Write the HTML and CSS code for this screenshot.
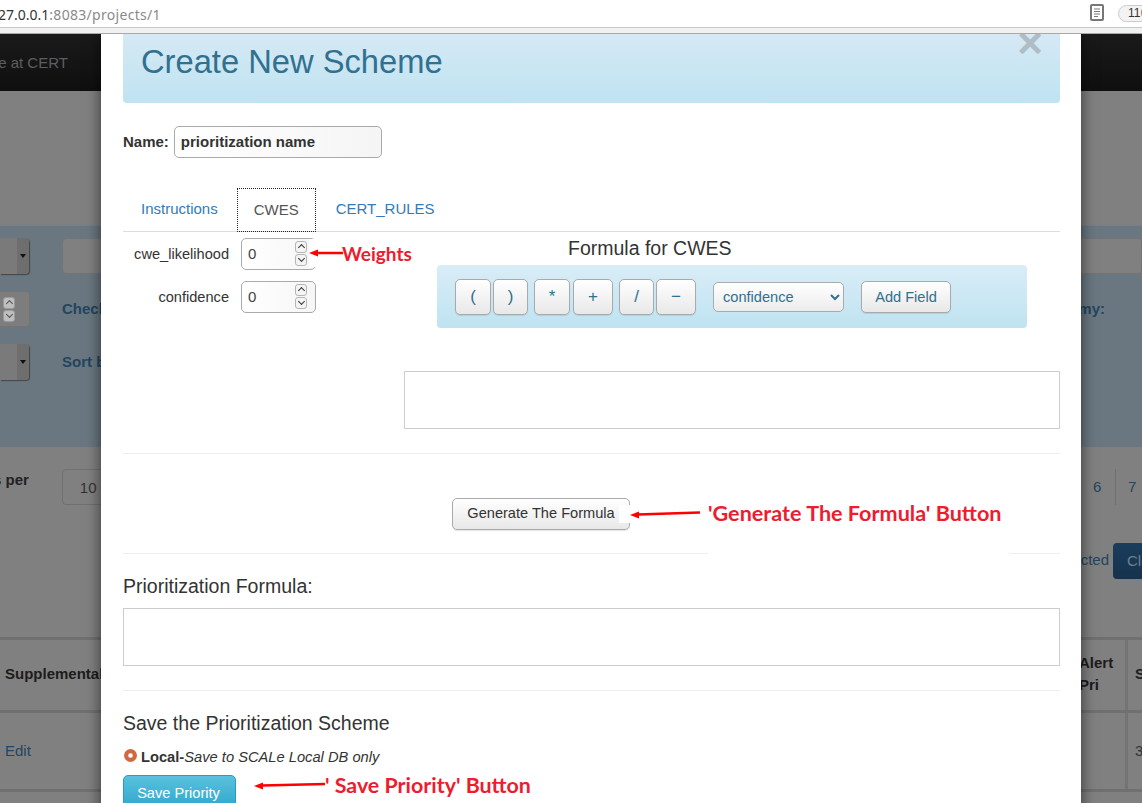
FILE: index.html
```html
<!DOCTYPE html>
<html lang="en">
<head>
  <meta charset="UTF-8">
  <title>SCALe - Create New Scheme</title>
  <link rel="stylesheet" href="styles.css">
</head>
<body>
  <div class="browser-bar">
    <div class="url"><b>27.0.0.1</b>:8083/projects/1</div>
    <svg class="reader" width="15" height="18" viewBox="0 0 15 18">
      <rect x="1" y="1" width="12" height="15" rx="1" fill="#fff" stroke="#777" stroke-width="2"/>
      <path d="M4 5h6M4 7.5h6M4 10h6M4 12.5h4" stroke="#777" stroke-width="1"/>
    </svg>
    <div class="ext-pill">11<span>6</span></div>
  </div>
  <div class="bar-strip"></div>

  <div class="page">
    <div class="navbar"><span class="brand">SCALe at CERT</span></div>
    <div class="page-gap"></div>

    <div class="filters">
      <div class="filter-row">
        <div class="bg-select"><i></i></div>
        <div class="bg-input"></div>
      </div>
      <div class="filter-row">
        <div class="bg-number">
          <span class="spin-btns"><span class="spin-btn up"></span><span class="spin-btn down"></span></span>
        </div>
        <b class="bg-label">Check</b>
        <b class="bg-label right">Taxonomy:</b>
      </div>
      <div class="filter-row">
        <div class="bg-select"><i></i></div>
        <b class="bg-label">Sort by</b>
      </div>
    </div>

    <div class="pager-row">
      <b class="per-label">s per</b>
      <div class="per-box">10</div>
      <div class="pager"><span>6</span><span>7</span></div>
    </div>
    <div class="action-row">
      <a class="selected-link">Selected</a>
      <div class="dark-btn">Clear</div>
    </div>

    <div class="bg-table">
      <div class="bg-tr head">
        <div class="bg-td first">Supplemental</div>
        <div class="bg-td alert">Alert<br>Pri</div>
        <div class="bg-td last">S</div>
      </div>
      <div class="bg-tr body">
        <div class="bg-td first"><a>Edit</a></div>
        <div class="bg-td alert"></div>
        <div class="bg-td last">3</div>
      </div>
    </div>

    <div class="modal">
      <div class="modal-head">
        <h2>Create New Scheme</h2>
        <span class="close">&times;</span>
      </div>

      <div class="name-row">
        <label for="prio-name">Name:</label>
        <input id="prio-name" class="name-input" type="text" value="prioritization name">
      </div>

      <ul class="tabs">
        <li><a>Instructions</a></li>
        <li class="active"><a>CWES</a></li>
        <li><a>CERT_RULES</a></li>
      </ul>

      <div class="tab-body">
        <div class="weights">
          <div class="weight">
            <label>cwe_likelihood</label>
            <div class="spinner">
              <input type="text" value="0">
              <span class="spin-btns"><span class="spin-btn up"></span><span class="spin-btn down"></span></span>
            </div>
          </div>
          <div class="weight">
            <label>confidence</label>
            <div class="spinner">
              <input type="text" value="0">
              <span class="spin-btns"><span class="spin-btn up"></span><span class="spin-btn down"></span></span>
            </div>
          </div>
        </div>
        <div class="formula">
          <h4>Formula for CWES</h4>
          <div class="formula-panel">
            <button class="op w36">(</button>
            <button class="op w35">)</button>
            <button class="op w36 gap6 star">*</button>
            <button class="op w40">+</button>
            <button class="op w35 gap6">/</button>
            <button class="op w40">&minus;</button>
            <select class="field-select">
              <option>confidence</option>
            </select>
            <button class="add-field">Add Field</button>
          </div>
        </div>
      </div>

      <textarea class="formula-box"></textarea>
      <hr class="rule-a">

      <button class="generate">Generate The Formula</button>
      <hr class="rule-b">

      <h4 class="section-title">Prioritization Formula:</h4>
      <textarea class="result-box"></textarea>
      <hr class="rule-c">

      <h4 class="section-title save-title">Save the Prioritization Scheme</h4>
      <div class="radio-row">
        <span class="radio"></span>
        <b>Local-</b><i>Save to SCALe Local DB only</i>
      </div>
      <button class="save">Save Priority</button>

      <div class="note note-weights">
        <svg class="arrow" width="34" height="10" viewBox="0 0 34 10"><path d="M34 5H8" stroke="#f00" stroke-width="2.5"/><path d="M0 5l9-3.5v7z" fill="#f00"/></svg>
        <span>Weights</span>
      </div>
      <div class="note note-generate">
        <span>'Generate The Formula' Button</span>
      </div>
      <div class="note-patch">
        <svg class="arrow" width="70" height="10" viewBox="0 0 70 10"><path d="M70 3.5L8 5.5" stroke="#f00" stroke-width="2.5"/><path d="M0 6l9-3.5v7z" fill="#f00"/></svg>
      </div>
      <div class="note note-save">
        <svg class="arrow" width="71" height="10" viewBox="0 0 71 10"><path d="M71 4L8 5.5" stroke="#f00" stroke-width="2.5"/><path d="M0 6l9-3.5v7z" fill="#f00"/></svg>
        <span>' Save Priority' Button</span>
      </div>
    </div>
  </div>
</body>
</html>
```
FILE: styles.css
```css
* {
  box-sizing: border-box;
}

html, body {
  margin: 0;
  height: 803px;
  overflow: hidden;
}

body {
  font-family: "Liberation Sans", Arial, sans-serif;
  font-size: 15px;
  color: #333;
  background: #808080;
}

/* browser chrome */
.browser-bar {
  display: flex;
  align-items: center;
  height: 28px;
  background: #fff;
  border-bottom: 1px solid #c8c8c8;
  overflow: hidden;
}

.url {
  margin: 2px 0 0 -2px;
  font-family: "Noto Sans", sans-serif;
  font-size: 14px;
  letter-spacing: .3px;
  color: #8a8a8a;
}

.url b {
  font-weight: 400;
  letter-spacing: 0;
  color: #333;
}

.reader {
  margin-left: auto;
  margin-top: -1px;
}

.ext-pill {
  flex: none;
  width: 40px;
  height: 17px;
  margin: -1px -16px 0 13px;
  padding-left: 9px;
  border: 1px solid #ccc;
  border-radius: 9px;
  background: #f3f3f3;
  font-size: 12px;
  line-height: 15px;
  color: #333;
}

.ext-pill span {
  color: #c66;
}

.bar-strip {
  height: 6px;
  background: #f1f1f1;
  border-bottom: 1px solid #a8a8a8;
}

/* page behind the modal */
.page {
  position: relative;
  height: 769px;
  overflow: hidden;
}

.navbar {
  height: 57px;
  background: linear-gradient(#1a1a1a, #0f0f0f);
  line-height: 57px;
  overflow: hidden;
}

.brand {
  display: block;
  margin-left: -41px;
  color: #5e5e5e;
}

.page-gap {
  height: 134px;
  background: #808080;
}

.filters {
  display: flex;
  flex-direction: column;
  gap: 17px;
  height: 222px;
  padding-top: 12px;
  background: #6a7780;
  border-top: 1px solid #728089;
}

.filter-row {
  display: flex;
  align-items: center;
  gap: 33px;
  height: 36px;
}

.bg-select {
  display: flex;
  justify-content: flex-end;
  width: 29px;
  height: 36px;
  background: #7a7a7a;
  border-radius: 0 4px 4px 0;
  box-shadow: 1px 1px 1px #444;
}

.bg-select i {
  position: relative;
  display: block;
  width: 12px;
  background: #6e6e6e;
  border-radius: 0 4px 4px 0;
}

.bg-select i::after {
  content: '';
  position: absolute;
  left: 3px;
  top: 16px;
  border: 3px solid transparent;
  border-top: 4px solid #111;
  border-bottom: 0;
}

.bg-input {
  flex: 1;
  height: 36px;
  background: #808080;
  border: 1px solid #747474;
  border-radius: 4px;
}

.bg-number {
  position: relative;
  width: 30px;
  height: 36px;
  margin-right: -1px;
  background: #7d7d7d;
  border: 1px solid #747474;
  border-left: 0;
  border-radius: 0 4px 4px 0;
}

.bg-number .spin-btns {
  top: 5px;
  left: 3px;
  right: auto;
  opacity: .55;
}

.bg-label {
  padding-bottom: 2px;
  color: #23455f;
}

.bg-label.right {
  margin-left: auto;
  margin-right: 37px;
}

.pager-row {
  display: flex;
  height: 96px;
  padding-top: 22px;
}

.per-label {
  margin-left: -7px;
  color: #222;
  line-height: 22px;
}

.per-box {
  width: 60px;
  height: 36px;
  margin-left: 33px;
  padding-left: 17px;
  border: 1px solid #707070;
  border-radius: 4px;
  line-height: 35px;
  color: #333;
}

.pager {
  display: flex;
  height: 36px;
  margin-left: auto;
}

.pager span {
  width: 35px;
  padding-left: 13px;
  line-height: 35px;
  color: #23455f;
}

.pager span + span {
  border-left: 1px solid #707070;
  padding-left: 12px;
  margin-right: -8px;
}

.action-row {
  display: flex;
  justify-content: flex-end;
  gap: 4px;
  height: 94px;
}

.selected-link {
  line-height: 34px;
  color: #23455f;
}

.dark-btn {
  width: 60px;
  height: 36px;
  margin-right: -31px;
  padding-left: 14px;
  background: linear-gradient(#1b3d5c, #16324c);
  border-radius: 4px;
  line-height: 36px;
  color: #6f8090;
}

.bg-table {
  border-top: 3px solid #707070;
}

.bg-tr {
  display: grid;
  grid-template-columns: 1fr 54px 12px;
  column-gap: 2px;
  border-bottom: 3px solid #707070;
}

.bg-tr.head {
  height: 73px;
  font-weight: bold;
  color: #1c1c1c;
}

.bg-tr.head .first,
.bg-tr.head .last {
  padding-bottom: 4px;
}

.bg-tr.body {
  height: 79px;
  color: #333;
}

.bg-tr.body .first,
.bg-tr.body .last {
  padding-bottom: 2px;
}

.bg-td {
  display: flex;
  align-items: center;
  padding-left: 5px;
}

.bg-td.alert {
  display: block;
  padding: 12px 0 0 5px;
  line-height: 22px;
  border-right: 3px solid #747474;
}

.bg-td a {
  color: #23455f;
}

/* modal */
.modal {
  position: absolute;
  left: 101px;
  top: 0;
  width: 980px;
  height: 830px;
  padding: 0 21px 0 22px;
  background: #fff;
  box-shadow: 0 0 14px rgba(0,0,0,.6);
}

.modal-head {
  position: relative;
  height: 69px;
  padding-left: 18px;
  background: linear-gradient(#d5e9f5, #bfe3f1);
  border-radius: 0 0 4px 4px;
}

.modal-head h2 {
  margin: 0;
  font-size: 32.7px;
  font-weight: 400;
  line-height: 56px;
  color: #31708f;
}

.close {
  position: absolute;
  top: -13px;
  right: 17px;
  font-size: 44px;
  font-weight: bold;
  line-height: 44px;
  color: #aebdc6;
}

.name-row {
  display: flex;
  align-items: center;
  gap: 5px;
  margin-top: 23px;
  font-weight: bold;
}

.name-row label {
  padding-bottom: 1px;
}

.name-input {
  width: 208px;
  height: 32px;
  padding: 0 6px 2px;
  background: linear-gradient(90deg, #fff, #f5f5f5);
  border: 1px solid #aaa;
  border-radius: 5px;
  font: bold 15px "Liberation Sans", Arial, sans-serif;
  color: #333;
}

.tabs {
  display: flex;
  gap: 2px;
  height: 45px;
  margin: 29px 0 0;
  padding: 0;
  list-style: none;
  border-bottom: 1px solid #ddd;
}

.tabs a {
  display: block;
  padding: 13px 18px 0;
  color: #337ab7;
}

.tabs .active {
  width: 79px;
  height: 44px;
  margin: 1px 0 0 -1px;
  border: 1px dotted #222;
}

.tabs .active a {
  padding: 12px 16px 0;
  color: #555;
}

.tab-body {
  display: flex;
  height: 96px;
}

.weights {
  display: flex;
  flex-direction: column;
  gap: 11px;
  width: 314px;
  padding-top: 6px;
  font-size: 14.6px;
}

.weight {
  display: flex;
  align-items: center;
  gap: 12px;
  width: 193px;
}

.weight label {
  flex: 1;
  text-align: right;
  color: #333;
}

.spinner {
  position: relative;
  width: 75px;
  height: 32px;
}

.spinner input {
  width: 100%;
  height: 100%;
  padding: 0 6px 2px;
  background: linear-gradient(90deg, #fff, #f6f6f6);
  border: 1px solid #aaa;
  border-radius: 5px;
  font: 15px "Liberation Sans", Arial, sans-serif;
  color: #444;
}

.spin-btns {
  position: absolute;
  top: 3px;
  right: 9px;
  display: flex;
  flex-direction: column;
  gap: 1px;
}

.spin-btn {
  position: relative;
  display: block;
  width: 12px;
  height: 12px;
  background: #f4f4f4;
  border: 1px solid #b5b5b5;
  border-radius: 3px;
}

.spin-btn::after {
  content: '';
  position: absolute;
  left: 3px;
  width: 4px;
  height: 4px;
  border-left: 1px solid #333;
  border-top: 1px solid #333;
}

.spin-btn.up::after {
  top: 3px;
  transform: rotate(45deg);
}

.spin-btn.down::after {
  top: 1px;
  transform: rotate(225deg);
}

.formula h4 {
  margin: 5px 0 6px 131px;
  font-size: 19.5px;
  font-weight: 400;
  line-height: 22px;
  color: #333;
}

.formula-panel {
  display: flex;
  align-items: center;
  width: 590px;
  height: 63px;
  padding-left: 18px;
  background: linear-gradient(#d9edf7, #bfe3f1);
  border-radius: 4px;
}

button {
  font-family: "Liberation Sans", Arial, sans-serif;
  background: linear-gradient(#fff, #e8e8e8);
  border: 1px solid #aaa;
  border-radius: 5px;
  box-shadow: 0 1px 1px rgba(0,0,0,.1);
  cursor: pointer;
}

.op {
  height: 36px;
  margin-right: 2px;
  padding: 0;
  font-size: 17px;
  color: #31708f;
}

.w35 { width: 35px; }
.w36 { width: 36px; }
.w40 { width: 40px; }
.gap6 { margin-left: 4px; }
.star { margin-right: 3px; }

.field-select {
  width: 131px;
  height: 30px;
  margin-left: 15px;
  padding-left: 5px;
  background: linear-gradient(#fff, #ececec);
  border: 1px solid #aaa;
  border-radius: 5px;
  font: 14.6px "Liberation Sans", Arial, sans-serif;
  color: #31708f;
}

.add-field {
  width: 90px;
  height: 32px;
  margin-left: 17px;
  padding: 0;
  font-size: 14.6px;
  color: #31708f;
}

textarea {
  display: block;
  resize: none;
  background: #fff;
  border: 1px solid #ccc;
  border-radius: 0;
}

.formula-box {
  width: 656px;
  height: 58px;
  margin: 43px 0 0 281px;
}

hr {
  height: 1px;
  margin: 0;
  border: 0;
  background: #eee;
}

.rule-a {
  margin-top: 24px;
}

.generate {
  display: block;
  width: 178px;
  height: 32px;
  margin: 44px 0 0 329px;
  padding: 0 0 2px;
  font-size: 14.6px;
  color: #333;
}

.rule-b {
  margin-top: 23px;
}

.section-title {
  margin: 18px 0 8px;
  font-size: 19.5px;
  font-weight: 400;
  line-height: 28px;
  color: #333;
}

.result-box {
  width: 100%;
  height: 58px;
}

.rule-c {
  margin-top: 24px;
}

.save-title {
  margin-bottom: 11px;
}

.radio-row {
  display: flex;
  align-items: center;
  height: 18px;
  margin-bottom: 9px;
  font-size: 14.7px;
}

.radio {
  width: 13px;
  height: 13px;
  margin: -3px 4px 0 1px;
  background: radial-gradient(circle, #fff 0 1.5px, #cf6a40 3px);
  border-radius: 50%;
}

.save {
  display: block;
  width: 113px;
  height: 38px;
  padding: 0 2px 3px 0;
  background: linear-gradient(#5bc0de, #2aa5cc);
  border: 1px solid #2b9bc2;
  font-size: 14.6px;
  color: #fff;
}

/* red annotations pasted on the screenshot */
.note {
  position: absolute;
  display: flex;
  align-items: center;
  background: #fff;
  font-family: Lato, sans-serif;
  font-size: 21.6px;
  font-weight: bold;
  color: #ed1c2e;
  white-space: nowrap;
}

.note-weights {
  left: 208px;
  top: 205px;
  width: 105px;
  height: 28px;
  font-size: 19px;
}

.note-generate {
  left: 607px;
  top: 463px;
  width: 301px;
  height: 57px;
}

.note-patch {
  position: absolute;
  left: 518px;
  top: 471px;
  width: 80px;
  height: 18px;
  background: #fff;
}

.note-save {
  left: 153px;
  top: 738px;
  font-size: 21.4px;
}

.note-weights .arrow {
  margin-right: -1px;
}

.note-generate span {
  margin-top: -26px;
}

.note-patch .arrow {
  position: absolute;
  left: 11px;
  top: 4px;
}
```
